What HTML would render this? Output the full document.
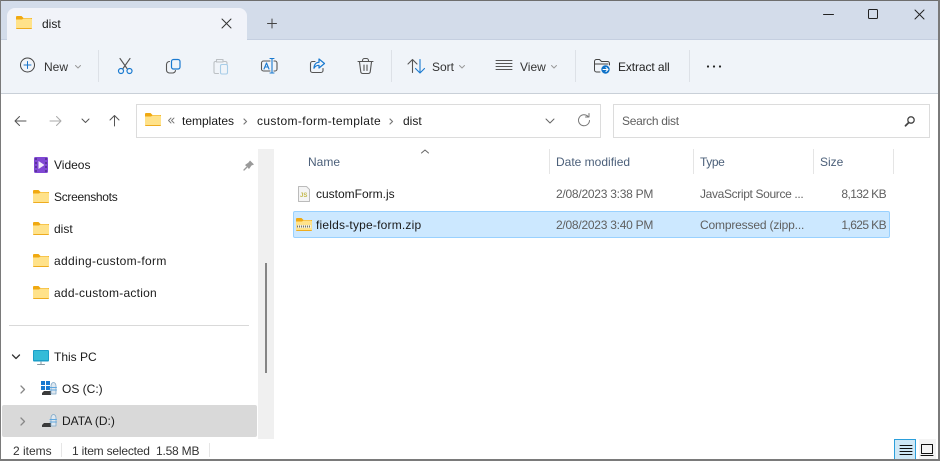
<!DOCTYPE html>
<html><head><meta charset="utf-8"><style>
html,body{margin:0;padding:0;background:#fff}
#w{position:relative;width:940px;height:461px;overflow:hidden;background:#fff;font-family:"Liberation Sans",sans-serif;font-size:12px;color:#1a1a1a}
#w div{position:absolute}
.t{white-space:nowrap;line-height:16px;height:16px}
.g{color:#5f5f5f}
svg{position:absolute;left:0;top:0}
</style></head><body><div id="w">
<div style="left:0;top:1px;width:940px;height:38px;background:#d3dcea"></div>
<div style="left:7px;top:8px;width:240px;height:32px;background:#f1f3f9;border-radius:8px 8px 0 0"></div>
<div style="left:0;top:39px;width:940px;height:54px;background:#f0f4f9;border-top:1px solid #c5cfe0;box-sizing:border-box"></div>
<div style="left:7px;top:38px;width:240px;height:2px;background:#f1f3f9"></div>
<div style="left:0;top:93px;width:940px;height:1px;background:#c9d0d8"></div>
<div style="left:136px;top:104px;width:465px;height:34px;border:1px solid #dcdcdc;box-sizing:border-box"></div>
<div style="left:613px;top:104px;width:317px;height:34px;border:1px solid #dcdcdc;box-sizing:border-box"></div>
<div style="left:258px;top:149px;width:16px;height:290px;background:#f0f0f0"></div>
<div style="left:265px;top:263px;width:2px;height:110px;background:#858585"></div>
<div style="left:9px;top:325px;width:240px;height:1px;background:#d9d9d9"></div>
<div style="left:2px;top:405px;width:255px;height:32px;background:#d9d9d9;border-radius:2px"></div>
<div style="left:293px;top:211px;width:597px;height:27px;background:#cce8ff;border:1px solid #99d1ff;box-sizing:border-box;border-radius:2px"></div>
<div style="left:549px;top:149px;width:1px;height:25px;background:#e5e5e5"></div>
<div style="left:693px;top:149px;width:1px;height:25px;background:#e5e5e5"></div>
<div style="left:813px;top:149px;width:1px;height:25px;background:#e5e5e5"></div>
<div style="left:893px;top:149px;width:1px;height:25px;background:#e5e5e5"></div>
<div style="left:98px;top:50px;width:1px;height:32px;background:#dde1e7"></div>
<div style="left:391px;top:50px;width:1px;height:32px;background:#dde1e7"></div>
<div style="left:575px;top:50px;width:1px;height:32px;background:#dde1e7"></div>
<div style="left:689px;top:50px;width:1px;height:32px;background:#dde1e7"></div>
<div style="left:61px;top:443px;width:1px;height:14px;background:#e6e6e6"></div>
<div style="left:209px;top:443px;width:1px;height:14px;background:#e6e6e6"></div>
<div style="left:894px;top:439px;width:22px;height:20px;background:#cfe8f6;border:1px solid #2b9fdb;border-bottom:0;box-sizing:border-box"></div>
<div style="left:919px;top:439px;width:17px;height:20px;background:#f4f4f4"></div>
<div style="left:0;top:0;width:940px;height:1px;background:#6e6e6e"></div>
<div style="left:0;top:0;width:1px;height:461px;background:#7a7a7a"></div>
<div style="left:938px;top:0;width:2px;height:461px;background:#7a7a7a"></div>
<div style="left:0;top:459px;width:940px;height:2px;background:#7a7a7a"></div>

<div class="t" style="left:42px;top:16px">dist</div>
<div class="t" style="left:44px;top:59px;color:#333">New</div>
<div class="t" style="left:432px;top:59px;color:#333">Sort</div>
<div class="t" style="left:520px;top:59px;color:#333">View</div>
<div class="t" style="left:618px;top:59px;color:#222;letter-spacing:-.1px">Extract all</div>
<div class="t" style="left:182px;top:113px">templates</div>
<div class="t" style="left:257px;top:113px;letter-spacing:.37px">custom-form-template</div>
<div class="t" style="left:403px;top:113px">dist</div>
<div class="t g" style="left:622px;top:113px;letter-spacing:-.3px">Search dist</div>
<div class="t" style="left:54px;top:157px">Videos</div>
<div class="t" style="left:54px;top:189px;letter-spacing:-.3px">Screenshots</div>
<div class="t" style="left:54px;top:221px">dist</div>
<div class="t" style="left:54px;top:253px;letter-spacing:.33px">adding-custom-form</div>
<div class="t" style="left:54px;top:285px;letter-spacing:.25px">add-custom-action</div>
<div class="t" style="left:54px;top:349px">This PC</div>
<div class="t" style="left:62px;top:381px">OS (C:)</div>
<div class="t" style="left:62px;top:413px">DATA (D:)</div>
<div class="t" style="left:308px;top:154px;color:#4c607a">Name</div>
<div class="t" style="left:556px;top:154px;color:#4c607a">Date modified</div>
<div class="t" style="left:700px;top:154px;color:#4c607a;letter-spacing:-.4px">Type</div>
<div class="t" style="left:820px;top:154px;color:#4c607a">Size</div>
<div class="t" style="left:316px;top:186px">customForm.js</div>
<div class="t" style="left:316px;top:217px;letter-spacing:.2px">fields-type-form.zip</div>
<div class="t g" style="left:556px;top:186px;letter-spacing:-.25px">2/08/2023 3:38 PM</div>
<div class="t g" style="left:556px;top:217px;letter-spacing:-.25px">2/08/2023 3:40 PM</div>
<div class="t g" style="left:700px;top:186px;letter-spacing:-.35px">JavaScript Source ...</div>
<div class="t g" style="left:700px;top:217px;letter-spacing:-.17px">Compressed (zipp...</div>
<div class="t g" style="right:54px;top:186px;letter-spacing:-.6px">8,132 KB</div>
<div class="t g" style="right:54px;top:217px;letter-spacing:-.6px">1,625 KB</div>
<div class="t" style="left:13px;top:443px;color:#333">2 items</div>
<div class="t" style="left:72px;top:443px;color:#333;letter-spacing:-.2px">1 item selected&nbsp; 1.58 MB</div>

<svg width="940" height="461" fill="none" stroke-linecap="round" stroke-linejoin="round">
<defs>
<g id="f"><path d="M0 2a1 1 0 0 1 1-1h4.500l2 2H16v3H0z" fill="#f0a911"/><path d="M0 4.500h6l1.500-1H15a1 1 0 0 1 1 1V13a1 1 0 0 1-1 1H1a1 1 0 0 1-1-1z" fill="#ffe28a"/><path d="M0 13h16a1 1 0 0 1-1 1H1a1 1 0 0 1-1-1z" fill="#eeac1f"/></g>
</defs>
<use href="#f" x="16" y="15"/>
<use href="#f" x="145" y="112"/>
<use href="#f" x="33" y="189"/>
<use href="#f" x="33" y="221"/>
<use href="#f" x="33" y="253"/>
<use href="#f" x="33" y="285"/>
<!-- tab controls -->
<path d="M222 19l9 9M231 19l-9 9" stroke="#333"/>
<path d="M272 19v9M267.500 23.500h9" stroke="#444"/>
<!-- window -->
<path d="M823.500 14.500h10" stroke="#222"/>
<rect x="868.500" y="9.500" width="9" height="9" rx="1" stroke="#222"/>
<path d="M915 10l9 9M924 10l-9 9" stroke="#222"/>
<!-- new -->
<circle cx="27.500" cy="65" r="7" stroke="#444"/>
<path d="M27.500 61.500v7M24 65h7" stroke="#1a73c8"/>
<path d="M75.500 65.500l2.500 2.500 2.500-2.500" stroke="#999"/>
<!-- cut -->
<path d="M120 58.500l7 10M130 58.500l-7 10" stroke="#555" stroke-width="1.100"/>
<circle cx="121" cy="71" r="2.500" stroke="#1a7ad0" stroke-width="1.200"/><circle cx="129.500" cy="71" r="2.500" stroke="#1a7ad0" stroke-width="1.200"/>
<!-- copy -->
<rect x="171.500" y="59.500" width="8.500" height="9.500" rx="2" stroke="#1a7ad0" stroke-width="1.200"/>
<path d="M169.500 61.500a3 3 0 0 0-3 3v5.500a3 3 0 0 0 3 3h3a3 3 0 0 0 3-2.500" stroke="#555" stroke-width="1.100"/>
<!-- paste -->
<path d="M216 61.500h-.5a1.500 1.500 0 0 0-1.500 1.500v9a1.500 1.500 0 0 0 1.500 1.500h3M224 61.500h1.500a1.500 1.500 0 0 1 1.500 1.500v1.500M216.500 59.500h6.500v2.500h-6.500z" stroke="#bcc0c4" stroke-width="1.100"/>
<rect x="220.500" y="64.500" width="7" height="9.500" rx="1.500" stroke="#a8cde8" stroke-width="1.100"/>
<!-- rename -->
<path d="M270 61h-6.500a2 2 0 0 0-2 2v6a2 2 0 0 0 2 2h6.500M274 61h1a2 2 0 0 1 2 2v6a2 2 0 0 1-2 2h-1" stroke="#555" stroke-width="1.100"/>
<path d="M272 58.500v14.500M270 58.500h4M270 73h4" stroke="#1a7ad0" stroke-width="1.100"/>
<path d="M264 69l2.500-6 2.500 6M265 67h3" stroke="#1a7ad0" stroke-width="1.100"/>
<!-- share -->
<path d="M315 61.500h-2.500a2 2 0 0 0-2 2v7a2 2 0 0 0 2 2h8.500a2 2 0 0 0 2-2v-2" stroke="#555" stroke-width="1.100"/>
<path d="M319 59l5.500 4.500-5.500 4.500v-2.700c-2.500 0-4 .8-5 3 0-3.500 1.700-6 5-6z" stroke="#1a7ad0" stroke-width="1.200"/>
<!-- delete -->
<path d="M358 61.500h15M362.500 61v-.5a2 2 0 0 1 2-2h2a2 2 0 0 1 2 2v.5M359.500 62l1.300 10a2 2 0 0 0 2 1.500h5.400a2 2 0 0 0 2-1.500l1.300-10M364 65v5.500M367 65v5.500" stroke="#555" stroke-width="1.100"/>
<!-- sort -->
<path d="M412.500 72.500V59.500M408 64l4.500-4.500L417 64" stroke="#555" stroke-width="1.100"/>
<path d="M420 59.500v13.500M415.500 68.500l4.500 4.500 4.500-4.500" stroke="#1a7ad0" stroke-width="1.100"/>
<path d="M459.500 65.500l2.500 2.500 2.500-2.500" stroke="#999"/>
<!-- view -->
<path d="M496 60.500h16M496 63.500h16M496 66.500h16M496 69.500h16" stroke="#555"/>
<path d="M551.500 65.500l2.500 2.500 2.500-2.500" stroke="#999"/>
<!-- extract -->
<path d="M600 72h-3.500a2 2 0 0 1-2-2V61.500a2 2 0 0 1 2-2h3l2 2h6a2 2 0 0 1 2 2v1.500M595 64h13" stroke="#444"/>
<circle cx="605.500" cy="69.500" r="4.200" fill="#0f72c8"/>
<path d="M603 69.500h5M606 67.500l2 2-2 2" stroke="#fff"/>
<!-- more -->
<circle cx="708" cy="66.500" r="1.100" fill="#222"/><circle cx="714" cy="66.500" r="1.100" fill="#222"/><circle cx="720" cy="66.500" r="1.100" fill="#222"/>
<!-- nav -->
<path d="M15 121h11M19.500 116.500L15 121l4.500 4.500" stroke="#555"/>
<path d="M50 121h11M56.500 116.500L61 121l-4.500 4.500" stroke="#aaa"/>
<path d="M82 119l3.500 3.500L89 119" stroke="#555"/>
<path d="M114.500 126V115.500M110 120l4.500-4.500L119 120" stroke="#555"/>
<path d="M171 118l-2.500 2.500 2.500 2.500M174 118l-2.500 2.500 2.500 2.500" stroke="#777" stroke-width=".9"/>
<path d="M244 119l2.500 2.500L244 124M390 119l2.500 2.500L390 124" stroke="#777" stroke-width="1.200"/>
<path d="M546 119l4 4 4-4" stroke="#666"/>
<path d="M588 116.500a5.500 5.500 0 1 0 1.500 4M589 113.500v3.500h-3.500" stroke="#777"/>
<circle cx="911" cy="120" r="3.200" stroke="#444" stroke-width="1.300"/>
<path d="M908.500 122.800l-3 3" stroke="#444" stroke-width="1.800"/>
<!-- sort arrow -->
<path d="M421.500 153l3.500-3 3.500 3" stroke="#666"/>
<!-- videos -->
<rect x="34" y="157" width="14" height="16" rx="1.500" fill="#8048d4"/>
<path d="M38.500 161l6 4-6 4z" fill="#f0e8fc"/>
<path d="M35.500 159h1M35.500 163h1M35.500 167h1M35.500 171h1M45.500 159h1M45.500 163h1M45.500 167h1M45.500 171h1" stroke="#2c1a55"/>
<!-- pin -->
<path d="M250 160.500l4 4-2.500 1-2.500 3.500-4-4 3.500-2.500z" fill="#9a9a9a"/><path d="M246.500 167.500l-2.500 2.500" stroke="#9a9a9a" stroke-width="1.300"/>
<!-- PC -->
<path d="M12.500 355l3.500 3.500 3.500-3.500" stroke="#333" stroke-width="1.300"/>
<rect x="33" y="350" width="16" height="11.500" rx="1" fill="#1b9ec8"/><path d="M34 351h14v9H34z" fill="#35bcd8"/>
<path d="M41 362v2M37.500 364.500h7" stroke="#8a98a2"/>
<!-- drive -->
<path d="M21 386l3.500 3.500L21 393M21 418l3.500 3.500L21 425" stroke="#888" stroke-width="1.300"/>
<rect x="41" y="381" width="4" height="4" fill="#1878d0"/><rect x="46" y="381" width="4" height="4" fill="#1878d0"/><rect x="41" y="386" width="4" height="4" fill="#1878d0"/><rect x="46" y="386" width="4" height="4" fill="#1878d0"/>
<g id="d"><path d="M44 391h7v4h-9v-2z" fill="#3a3a3a"/><path d="M51 386a2.500 3.500 0 0 1 5 0v8h-5z" fill="#dfe8f0" stroke="#7fa8c8" stroke-width=".8"/><path d="M50 387.500h6.500M50 390h6.500" stroke="#5fa8e0"/></g>
<use href="#d" y="32"/>
<!-- js file -->
<path d="M298.500 186.500h8l3 3v12h-11z" fill="#f4f4f4" stroke="#bbb"/>
<text x="300" y="197" font-family="Liberation Sans" font-size="6" font-weight="bold" fill="#c2b84a">JS</text>
<!-- zip -->
<use href="#f" x="296" y="217"/>
<rect x="297" y="225" width="14" height="3" fill="#f4f0dc"/>
<path d="M297 226.500h14" stroke="#77776a" stroke-width="2" stroke-dasharray="1 1" stroke-linecap="butt"/>
<!-- status view icons -->
<path d="M900 445.500h12M900 448.500h12M900 451.500h12M900 454.500h12" stroke="#111"/>
<rect x="921.500" y="444.500" width="11" height="9" stroke="#111"/><path d="M921 455.500h12" stroke="#111"/>
</svg>
</div></body></html>
